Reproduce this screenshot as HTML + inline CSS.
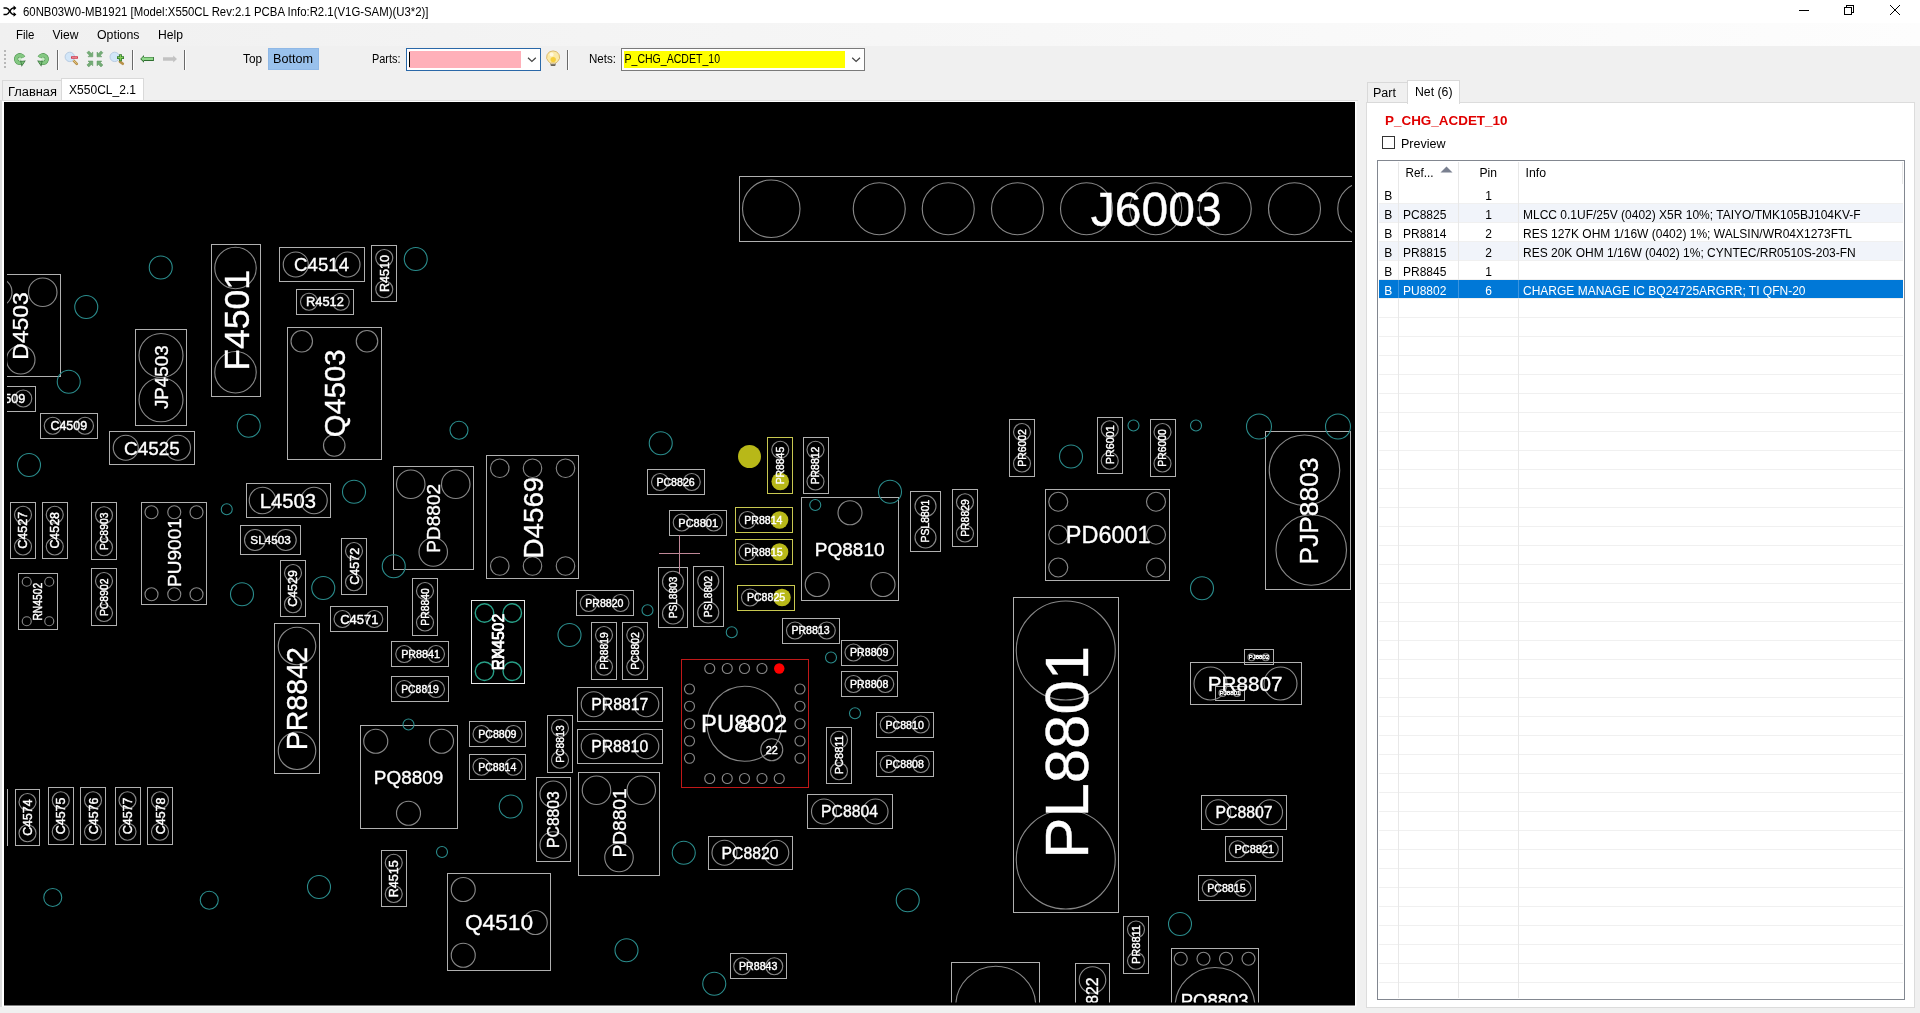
<!DOCTYPE html>
<html><head><meta charset="utf-8"><title>60NB03W0-MB1921</title>
<style>
html,body{margin:0;padding:0;background:#f0f0f0;overflow:hidden}
svg{display:block;will-change:transform}
text{font-family:"Liberation Sans",sans-serif}
</style></head><body>
<svg width="1920" height="1013" viewBox="0 0 1920 1013">
<defs>
<clipPath id="pc"><rect x="7" y="105" width="1345" height="897.5"/></clipPath>
<linearGradient id="mg" x1="0" x2="1" y1="0" y2="0"><stop offset="0" stop-color="#f0f0f0"/><stop offset="1" stop-color="#fdfdfd"/></linearGradient>
</defs>
<rect x="0" y="0" width="1920" height="1013" fill="#f0f0f0"/>
<rect x="0" y="0" width="1920" height="23" fill="#ffffff"/>
<rect x="0" y="23" width="1920" height="23" fill="url(#mg)"/>
<g fill="none" stroke="#000" stroke-width="1.5" stroke-linecap="butt" stroke-linejoin="miter"><path d="M3.5 8H6.5C9.5 8 10 14.4 13 14.4H15"/><path d="M3.5 14.4H6.5C9.5 14.4 10 8 13 8H15"/></g><path d="M13.6 5.6L16.4 8L13.6 10.4ZM13.6 12L16.4 14.4L13.6 16.8Z" fill="#000"/>
<text x="23" y="15.6" font-size="12" fill="#000" textLength="405.5" lengthAdjust="spacingAndGlyphs">60NB03W0-MB1921 [Model:X550CL Rev:2.1 PCBA Info:R2.1(V1G-SAM)(U3*2)]</text>
<g stroke="#000" stroke-width="1" fill="none" shape-rendering="crispEdges"><path d="M1799 10.5H1809"/><rect x="1844.5" y="7.5" width="7" height="7"/><path d="M1846.5 7.5V5.5H1853.5V12.5H1851.5"/></g><path d="M1890 5L1900 15M1900 5L1890 15" stroke="#000" stroke-width="1" fill="none"/>
<text x="16" y="38.5" font-size="12" fill="#000" textLength="18.5" lengthAdjust="spacingAndGlyphs">File</text>
<text x="52.5" y="38.5" font-size="12" fill="#000" textLength="26" lengthAdjust="spacingAndGlyphs">View</text>
<text x="97" y="38.5" font-size="12" fill="#000" textLength="42.5" lengthAdjust="spacingAndGlyphs">Options</text>
<text x="158" y="38.5" font-size="12" fill="#000" textLength="25" lengthAdjust="spacingAndGlyphs">Help</text>
<g fill="#b8b8b8"><rect x="4" y="50" width="2" height="2"/><rect x="4" y="54" width="2" height="2"/><rect x="4" y="58" width="2" height="2"/><rect x="4" y="62" width="2" height="2"/><rect x="4" y="66" width="2" height="2"/></g>
<path d="M57.5 49.5V70" stroke="#6a6a6a" stroke-width="1" shape-rendering="crispEdges"/><path d="M58.5 49.5V70" stroke="#ffffff" stroke-width="1" shape-rendering="crispEdges"/>
<path d="M132.5 49.5V70" stroke="#6a6a6a" stroke-width="1" shape-rendering="crispEdges"/><path d="M133.5 49.5V70" stroke="#ffffff" stroke-width="1" shape-rendering="crispEdges"/>
<path d="M184.5 49.5V70" stroke="#6a6a6a" stroke-width="1" shape-rendering="crispEdges"/><path d="M185.5 49.5V70" stroke="#ffffff" stroke-width="1" shape-rendering="crispEdges"/>
<path d="M567.5 49.5V70" stroke="#6a6a6a" stroke-width="1" shape-rendering="crispEdges"/><path d="M568.5 49.5V70" stroke="#ffffff" stroke-width="1" shape-rendering="crispEdges"/>
<g transform="translate(19.9,59.1) scale(1,1)"><path d="M3.45 -1.6A3.8 3.8 0 1 0 2.45 2.9" fill="none" stroke="#4f9450" stroke-width="4.3"/><path d="M3.45 -1.6A3.8 3.8 0 1 0 2.45 2.9" fill="none" stroke="#84c882" stroke-width="3.1"/><path d="M0.4 1.9L5.9 1.5L1.7 7.7Z" fill="#2f6a34"/><path d="M1.2 2.5L4.8 2.2L2 6.2Z" fill="#78bd76"/><circle cx="0.1" cy="-0.1" r="1.3" fill="#c4f0c0"/></g>
<g transform="translate(43,59.1) scale(-1,1)"><path d="M3.45 -1.6A3.8 3.8 0 1 0 2.45 2.9" fill="none" stroke="#4f9450" stroke-width="4.3"/><path d="M3.45 -1.6A3.8 3.8 0 1 0 2.45 2.9" fill="none" stroke="#84c882" stroke-width="3.1"/><path d="M0.4 1.9L5.9 1.5L1.7 7.7Z" fill="#2f6a34"/><path d="M1.2 2.5L4.8 2.2L2 6.2Z" fill="#78bd76"/><circle cx="0.1" cy="-0.1" r="1.3" fill="#c4f0c0"/></g>
<g><path d="M73.6 60.7L76.8 63.9" stroke="#b89048" stroke-width="2.6" stroke-linecap="round"/><path d="M73.4 60.3L76.4 63.3" stroke="#e8cc88" stroke-width="1" stroke-linecap="round"/><circle cx="69.8" cy="56.9" r="4.7" fill="#d2e6f8" stroke="#b4c8e0" stroke-width="0.9"/><rect x="71.1" y="56.3" width="6.8" height="2.4" fill="#d02c40"/><rect x="72" y="57" width="5" height="0.9" fill="#f08890"/></g>
<g><path d="M119.9 61.6L122.8 63.8" stroke="#b89048" stroke-width="2.6" stroke-linecap="round"/><circle cx="114.7" cy="56.9" r="4.7" fill="#d2e6f8" stroke="#b4c8e0" stroke-width="0.9"/><path d="M117 57.7H124M120.5 54.2V61.2" stroke="#2e7a28" stroke-width="2.8"/><path d="M117.8 57.7H123.2M120.5 55V60.4" stroke="#84cc58" stroke-width="1.2"/></g>
<g transform="translate(94.9,58.9)" fill="#74ac76" stroke="#5a945c" stroke-width="0.5"><path transform="scale(-1,-1)" d="M2.1 2.1H6.9L5.5 3.6L8 6.1L6.1 8L3.6 5.5L2.1 6.9Z"/><path transform="scale(-1,1)" d="M2.1 2.1H6.9L5.5 3.6L8 6.1L6.1 8L3.6 5.5L2.1 6.9Z"/><path transform="scale(1,-1)" d="M2.1 2.1H6.9L5.5 3.6L8 6.1L6.1 8L3.6 5.5L2.1 6.9Z"/><path transform="scale(1,1)" d="M2.1 2.1H6.9L5.5 3.6L8 6.1L6.1 8L3.6 5.5L2.1 6.9Z"/></g>
<path d="M140.2 58.9L144 55.1V56.9H153.9V60.9H144V62.8Z" fill="#2f6f30"/>
<path d="M141.2 58.8L143.6 56.4V57.5H153V60H143.6V61.2Z" fill="#90d88a"/>
<path d="M177 59L173.2 55.4V57.3H163V60.7H173.2V62.6Z" fill="#c2c2c2"/>
<text x="243" y="63" font-size="12" fill="#000" textLength="19" lengthAdjust="spacingAndGlyphs">Top</text>
<rect x="268" y="48" width="51" height="22" fill="#99c1ec"/><rect x="268.5" y="48.5" width="50" height="21" fill="none" stroke="#8fb8e6"/>
<text x="273" y="63" font-size="12" fill="#000" textLength="40" lengthAdjust="spacingAndGlyphs">Bottom</text>
<text x="372" y="63" font-size="12" fill="#000" textLength="28.5" lengthAdjust="spacingAndGlyphs">Parts:</text>
<rect x="406.5" y="48.5" width="134" height="22" fill="#fff" stroke="#2a68a8" shape-rendering="crispEdges"/>
<rect x="409" y="51" width="112" height="17" fill="#ffb0b9"/>
<path d="M409.5 52V67" stroke="#000" stroke-width="1" shape-rendering="crispEdges"/>
<path d="M528 57.7L531.9 61.5L535.8 57.7" fill="none" stroke="#444" stroke-width="1.2"/>
<g><rect x="550.5" y="62" width="5.1" height="3.9" rx="0.8" fill="#6a6458"/><rect x="551" y="63" width="4.1" height="1.2" fill="#d8d8d0"/><path d="M553.1 50.9A6.4 6.2 0 0 1 557.6 61.6L555.8 63H550.4L548.6 61.6A6.4 6.2 0 0 1 553.1 50.9Z" fill="#fbeaa8" stroke="#d8b468" stroke-width="0.9"/><circle cx="553.2" cy="59.6" r="2.7" fill="#f6cf3c"/><circle cx="551.6" cy="54.6" r="2" fill="#fff8e0"/></g>
<text x="589" y="63" font-size="12" fill="#000" textLength="27" lengthAdjust="spacingAndGlyphs">Nets:</text>
<rect x="621.5" y="48.5" width="243" height="22" fill="#fff" stroke="#7a7a7a" shape-rendering="crispEdges"/>
<rect x="624" y="51" width="221" height="17" fill="#ffff00"/>
<text x="624.5" y="63" font-size="12" fill="#000" textLength="95.5" lengthAdjust="spacingAndGlyphs">P_CHG_ACDET_10</text>
<path d="M852.2 57.7L856.1 61.5L860 57.7" fill="none" stroke="#444" stroke-width="1.2"/>
<rect x="2.5" y="80.5" width="59" height="22" fill="#f0f0f0" stroke="#d9d9d9" shape-rendering="crispEdges"/>
<rect x="61.5" y="78.5" width="82" height="24" fill="#ffffff" stroke="#d9d9d9" shape-rendering="crispEdges"/>
<rect x="62" y="100" width="81" height="3" fill="#ffffff"/>
<text x="8" y="96" font-size="12.5" fill="#000" textLength="49" lengthAdjust="spacingAndGlyphs">Главная</text>
<text x="69" y="93.5" font-size="12.5" fill="#000" textLength="67" lengthAdjust="spacingAndGlyphs">X550CL_2.1</text>
<rect x="0" y="100" width="1358" height="1" fill="#dddddd"/>
<rect x="0" y="101" width="2" height="906" fill="#dcdcdc"/>
<rect x="2" y="101" width="1354.5" height="905.5" fill="#ffffff"/>
<rect x="4" y="102" width="1351" height="903.5" fill="#000000"/>
<rect x="1366.5" y="102.5" width="1547" height="0" fill="none"/>
<rect x="1366.5" y="102.5" width="548" height="905" fill="#ffffff" stroke="#dcdcdc" shape-rendering="crispEdges"/>
<rect x="1367.5" y="82.5" width="40" height="20" fill="#f0f0f0" stroke="#d9d9d9" shape-rendering="crispEdges"/>
<rect x="1407.5" y="80.5" width="52" height="23" fill="#ffffff" stroke="#d9d9d9" shape-rendering="crispEdges"/>
<rect x="1408" y="101" width="51" height="3" fill="#ffffff"/>
<text x="1373" y="97.3" font-size="12" fill="#000" textLength="23" lengthAdjust="spacingAndGlyphs">Part</text>
<text x="1415" y="95.6" font-size="12" fill="#000" textLength="37.5" lengthAdjust="spacingAndGlyphs">Net (6)</text>
<text x="1385" y="124.6" font-size="13.33" fill="#e00000" textLength="122.5" lengthAdjust="spacingAndGlyphs" font-weight="bold">P_CHG_ACDET_10</text>
<rect x="1382.5" y="136.5" width="12" height="12" fill="#fff" stroke="#333" shape-rendering="crispEdges"/>
<text x="1401" y="147.5" font-size="12" fill="#000" textLength="44.5" lengthAdjust="spacingAndGlyphs">Preview</text>
<rect x="1377.5" y="160.5" width="527" height="839" fill="#fff" stroke="#828790" shape-rendering="crispEdges"/>
<rect x="1379" y="204" width="524" height="18" fill="#f1f4fa"/>
<rect x="1379" y="242" width="524" height="18" fill="#f1f4fa"/>
<rect x="1379" y="280" width="524" height="18" fill="#f1f4fa"/>
<g stroke="#f0f0f0" stroke-width="1" shape-rendering="crispEdges"><path d="M1379 203.5H1903"/><path d="M1379 222.5H1903"/><path d="M1379 241.5H1903"/><path d="M1379 260.5H1903"/><path d="M1379 279.5H1903"/><path d="M1379 298.5H1903"/><path d="M1379 317.5H1903"/><path d="M1379 336.5H1903"/><path d="M1379 355.5H1903"/><path d="M1379 374.5H1903"/><path d="M1379 393.5H1903"/><path d="M1379 412.5H1903"/><path d="M1379 431.5H1903"/><path d="M1379 450.5H1903"/><path d="M1379 469.5H1903"/><path d="M1379 488.5H1903"/><path d="M1379 507.5H1903"/><path d="M1379 526.5H1903"/><path d="M1379 545.5H1903"/><path d="M1379 564.5H1903"/><path d="M1379 583.5H1903"/><path d="M1379 602.5H1903"/><path d="M1379 621.5H1903"/><path d="M1379 640.5H1903"/><path d="M1379 659.5H1903"/><path d="M1379 678.5H1903"/><path d="M1379 697.5H1903"/><path d="M1379 716.5H1903"/><path d="M1379 735.5H1903"/><path d="M1379 754.5H1903"/><path d="M1379 773.5H1903"/><path d="M1379 792.5H1903"/><path d="M1379 811.5H1903"/><path d="M1379 830.5H1903"/><path d="M1379 849.5H1903"/><path d="M1379 868.5H1903"/><path d="M1379 887.5H1903"/><path d="M1379 906.5H1903"/><path d="M1379 925.5H1903"/><path d="M1379 944.5H1903"/><path d="M1379 963.5H1903"/><path d="M1379 982.5H1903"/></g>
<g stroke="#e8e8e8" stroke-width="1" shape-rendering="crispEdges"><path d="M1398.5 162V998M1458.5 162V998M1518.5 162V998M1902.5 162V184"/></g>
<rect x="1379" y="280" width="524" height="18" fill="#0078d7"/>
<g stroke="#3a94e0" stroke-width="1" shape-rendering="crispEdges"><path d="M1398.5 280V298M1458.5 280V298M1518.5 280V298"/></g>
<text x="1405.5" y="177" font-size="12" fill="#000" textLength="28" lengthAdjust="spacingAndGlyphs">Ref...</text>
<path d="M1440.5 172.5L1446.5 166.5L1452.5 172.5Z" fill="#7a8090"/>
<text x="1479.5" y="177" font-size="12" fill="#000" textLength="17.5" lengthAdjust="spacingAndGlyphs">Pin</text>
<text x="1525.5" y="177" font-size="12" fill="#000" textLength="20.5" lengthAdjust="spacingAndGlyphs">Info</text>
<text x="1384.3" y="200" font-size="12" fill="#000">B</text>
<text x="1488.7" y="200" font-size="12" fill="#000" text-anchor="middle">1</text>
<text x="1384.3" y="219" font-size="12" fill="#000">B</text>
<text x="1403" y="219" font-size="12" fill="#000">PC8825</text>
<text x="1488.7" y="219" font-size="12" fill="#000" text-anchor="middle">1</text>
<text x="1523" y="219" font-size="12" fill="#000">MLCC 0.1UF/25V (0402) X5R 10%; TAIYO/TMK105BJ104KV-F</text>
<text x="1384.3" y="238" font-size="12" fill="#000">B</text>
<text x="1403" y="238" font-size="12" fill="#000">PR8814</text>
<text x="1488.7" y="238" font-size="12" fill="#000" text-anchor="middle">2</text>
<text x="1523" y="238" font-size="12" fill="#000">RES 127K OHM 1/16W (0402) 1%; WALSIN/WR04X1273FTL</text>
<text x="1384.3" y="257" font-size="12" fill="#000">B</text>
<text x="1403" y="257" font-size="12" fill="#000">PR8815</text>
<text x="1488.7" y="257" font-size="12" fill="#000" text-anchor="middle">2</text>
<text x="1523" y="257" font-size="12" fill="#000">RES 20K OHM 1/16W (0402) 1%; CYNTEC/RR0510S-203-FN</text>
<text x="1384.3" y="276" font-size="12" fill="#000">B</text>
<text x="1403" y="276" font-size="12" fill="#000">PR8845</text>
<text x="1488.7" y="276" font-size="12" fill="#000" text-anchor="middle">1</text>
<text x="1384.3" y="295" font-size="12" fill="#fff">B</text>
<text x="1403" y="295" font-size="12" fill="#fff">PU8802</text>
<text x="1488.7" y="295" font-size="12" fill="#fff" text-anchor="middle">6</text>
<text x="1523" y="295" font-size="12" fill="#fff">CHARGE MANAGE IC BQ24725ARGRR; TI QFN-20</text>
<g clip-path="url(#pc)">
<g fill="none" stroke-width="1" shape-rendering="crispEdges">
<rect x="-19.5" y="274.5" width="80" height="102" stroke="#b0b0b0"/>
<rect x="-21.5" y="386.5" width="57" height="25" stroke="#b0b0b0"/>
<rect x="40.5" y="413.5" width="57" height="25" stroke="#b0b0b0"/>
<rect x="135.5" y="329.5" width="51" height="96" stroke="#b0b0b0"/>
<rect x="211.5" y="244.5" width="49" height="152" stroke="#b0b0b0"/>
<rect x="279.5" y="247.5" width="85" height="34" stroke="#b0b0b0"/>
<rect x="371.5" y="245.5" width="25" height="56" stroke="#b0b0b0"/>
<rect x="296.5" y="289.5" width="57" height="25" stroke="#b0b0b0"/>
<rect x="287.5" y="327.5" width="94" height="132" stroke="#b0b0b0"/>
<rect x="109.5" y="431.5" width="85" height="33" stroke="#b0b0b0"/>
<rect x="246.5" y="483.5" width="84" height="34" stroke="#b0b0b0"/>
<rect x="393.5" y="466.5" width="80" height="103" stroke="#b0b0b0"/>
<rect x="10.5" y="502.5" width="25" height="56" stroke="#b0b0b0"/>
<rect x="42.5" y="502.5" width="25" height="56" stroke="#b0b0b0"/>
<rect x="91.5" y="502.5" width="25" height="57" stroke="#b0b0b0"/>
<rect x="91.5" y="568.5" width="25" height="57" stroke="#b0b0b0"/>
<rect x="18.5" y="573.5" width="39" height="56" stroke="#b0b0b0"/>
<rect x="141.5" y="502.5" width="65" height="102" stroke="#b0b0b0"/>
<rect x="240.5" y="525.5" width="60" height="29" stroke="#b0b0b0"/>
<rect x="280.5" y="560.5" width="25" height="56" stroke="#b0b0b0"/>
<rect x="341.5" y="538.5" width="25" height="56" stroke="#b0b0b0"/>
<rect x="330.5" y="606.5" width="57" height="25" stroke="#b0b0b0"/>
<rect x="412.5" y="578.5" width="25" height="57" stroke="#b0b0b0"/>
<rect x="391.5" y="641.5" width="57" height="25" stroke="#b0b0b0"/>
<rect x="391.5" y="676.5" width="57" height="25" stroke="#b0b0b0"/>
<rect x="274.5" y="623.5" width="45" height="150" stroke="#b0b0b0"/>
<rect x="15.5" y="789.5" width="24" height="56" stroke="#b0b0b0"/>
<rect x="48.5" y="787.5" width="25" height="57" stroke="#b0b0b0"/>
<rect x="80.5" y="787.5" width="25" height="57" stroke="#b0b0b0"/>
<rect x="115.5" y="787.5" width="25" height="57" stroke="#b0b0b0"/>
<rect x="147.5" y="787.5" width="25" height="57" stroke="#b0b0b0"/>
<rect x="360.5" y="725.5" width="97" height="103" stroke="#b0b0b0"/>
<rect x="381.5" y="850.5" width="25" height="56" stroke="#b0b0b0"/>
<rect x="447.5" y="873.5" width="103" height="97" stroke="#b0b0b0"/>
<rect x="739.5" y="176.5" width="833" height="65" stroke="#b0b0b0"/>
<rect x="486.5" y="455.5" width="92" height="123" stroke="#b0b0b0"/>
<rect x="647.5" y="469.5" width="57" height="25" stroke="#b0b0b0"/>
<rect x="669.5" y="510.5" width="57" height="25" stroke="#b0b0b0"/>
<rect x="803.5" y="437.5" width="25" height="56" stroke="#b0b0b0"/>
<rect x="801.5" y="497.5" width="97" height="103" stroke="#b0b0b0"/>
<rect x="910.5" y="491.5" width="30" height="60" stroke="#b0b0b0"/>
<rect x="952.5" y="489.5" width="25" height="57" stroke="#b0b0b0"/>
<rect x="658.5" y="567.5" width="29" height="60" stroke="#b0b0b0"/>
<rect x="693.5" y="566.5" width="30" height="60" stroke="#b0b0b0"/>
<rect x="576.5" y="590.5" width="57" height="25" stroke="#b0b0b0"/>
<rect x="591.5" y="622.5" width="25" height="57" stroke="#b0b0b0"/>
<rect x="622.5" y="622.5" width="25" height="57" stroke="#b0b0b0"/>
<rect x="782.5" y="618.5" width="57" height="25" stroke="#b0b0b0"/>
<rect x="841.5" y="640.5" width="56" height="25" stroke="#b0b0b0"/>
<rect x="841.5" y="671.5" width="56" height="25" stroke="#b0b0b0"/>
<rect x="577.5" y="687.5" width="85" height="34" stroke="#b0b0b0"/>
<rect x="577.5" y="729.5" width="85" height="34" stroke="#b0b0b0"/>
<rect x="547.5" y="715.5" width="25" height="57" stroke="#b0b0b0"/>
<rect x="469.5" y="721.5" width="56" height="25" stroke="#b0b0b0"/>
<rect x="469.5" y="754.5" width="56" height="25" stroke="#b0b0b0"/>
<rect x="826.5" y="727.5" width="25" height="56" stroke="#b0b0b0"/>
<rect x="876.5" y="712.5" width="57" height="25" stroke="#b0b0b0"/>
<rect x="876.5" y="751.5" width="57" height="25" stroke="#b0b0b0"/>
<rect x="536.5" y="777.5" width="34" height="84" stroke="#b0b0b0"/>
<rect x="578.5" y="772.5" width="81" height="103" stroke="#b0b0b0"/>
<rect x="807.5" y="794.5" width="85" height="34" stroke="#b0b0b0"/>
<rect x="708.5" y="836.5" width="84" height="33" stroke="#b0b0b0"/>
<rect x="730.5" y="953.5" width="56" height="25" stroke="#b0b0b0"/>
<rect x="1009.5" y="419.5" width="25" height="57" stroke="#b0b0b0"/>
<rect x="1097.5" y="417.5" width="25" height="56" stroke="#b0b0b0"/>
<rect x="1150.5" y="419.5" width="25" height="57" stroke="#b0b0b0"/>
<rect x="1045.5" y="489.5" width="124" height="91" stroke="#b0b0b0"/>
<rect x="1265.5" y="431.5" width="85" height="158" stroke="#b0b0b0"/>
<rect x="1013.5" y="597.5" width="105" height="315" stroke="#b0b0b0"/>
<rect x="1190.5" y="662.5" width="111" height="42" stroke="#b0b0b0"/>
<rect x="1244.5" y="649.5" width="29" height="15" stroke="#b0b0b0"/>
<rect x="1215.5" y="686.5" width="29" height="14" stroke="#b0b0b0"/>
<rect x="1201.5" y="795.5" width="85" height="34" stroke="#b0b0b0"/>
<rect x="1225.5" y="836.5" width="57" height="25" stroke="#b0b0b0"/>
<rect x="1198.5" y="875.5" width="57" height="25" stroke="#b0b0b0"/>
<rect x="1123.5" y="916.5" width="25" height="57" stroke="#b0b0b0"/>
<rect x="1171.5" y="948.5" width="87" height="104" stroke="#b0b0b0"/>
<rect x="951.5" y="962.5" width="88" height="88" stroke="#b0b0b0"/>
<rect x="1075.5" y="963.5" width="34" height="85" stroke="#b0b0b0"/>
<rect x="471.5" y="600.5" width="53" height="83" stroke="#e8e8e8"/>
<path d="M7.5 789V846" stroke="#b0b0b0"/>
<rect x="767.5" y="437.5" width="25" height="56" stroke="#c8c850"/>
<rect x="735.5" y="507.5" width="57" height="25" stroke="#c8c850"/>
<rect x="735.5" y="539.5" width="57" height="25" stroke="#c8c850"/>
<rect x="737.5" y="585.5" width="57" height="25" stroke="#c8c850"/>
<rect x="681.5" y="659.5" width="127" height="128" stroke="#c01818"/>
</g>
<g fill="none" stroke="#868686" stroke-width="1.15">
<circle cx="42.75" cy="292.25" r="14.25"/>
<circle cx="20.75" cy="359.75" r="14.25"/>
<circle cx="-2.25" cy="292.25" r="14.25"/>
<circle cx="23.25" cy="398.5" r="8.5"/>
<circle cx="-9" cy="398.5" r="8.5"/>
<circle cx="52.75" cy="425.75" r="8.5"/>
<circle cx="85" cy="425.75" r="8.5"/>
<circle cx="161" cy="355.5" r="22"/>
<circle cx="161" cy="399.75" r="22"/>
<circle cx="235.5" cy="268" r="20.75"/>
<circle cx="235.5" cy="372.25" r="20.75"/>
<circle cx="295.75" cy="264.5" r="12.5"/>
<circle cx="347.5" cy="264.5" r="12.5"/>
<circle cx="384.25" cy="258" r="8.5"/>
<circle cx="384.25" cy="289.25" r="8.5"/>
<circle cx="309" cy="301.75" r="8.5"/>
<circle cx="340.75" cy="301.75" r="8.5"/>
<circle cx="301.75" cy="341.25" r="10.75"/>
<circle cx="367" cy="341.25" r="10.75"/>
<circle cx="334.25" cy="445.5" r="10.75"/>
<circle cx="125.75" cy="447.75" r="12.5"/>
<circle cx="178" cy="447.75" r="12.5"/>
<circle cx="262.5" cy="500.5" r="13.25"/>
<circle cx="314" cy="500.5" r="13.25"/>
<circle cx="410.75" cy="484.25" r="14.25"/>
<circle cx="455.75" cy="484.25" r="14.25"/>
<circle cx="433.25" cy="552" r="14.25"/>
<circle cx="23" cy="514.75" r="8.5"/>
<circle cx="23" cy="546.5" r="8.5"/>
<circle cx="54.75" cy="514.75" r="8.5"/>
<circle cx="54.75" cy="546.5" r="8.5"/>
<circle cx="104" cy="515.25" r="8.5"/>
<circle cx="104" cy="547.25" r="8.5"/>
<circle cx="104" cy="581" r="8.5"/>
<circle cx="104" cy="613" r="8.5"/>
<circle cx="26.75" cy="581.75" r="4.5"/>
<circle cx="49.25" cy="581.75" r="4.5"/>
<circle cx="26.75" cy="621.25" r="4.5"/>
<circle cx="49.25" cy="621.25" r="4.5"/>
<circle cx="151.5" cy="512.25" r="6.5"/>
<circle cx="151.5" cy="594.25" r="6.5"/>
<circle cx="174.25" cy="512.25" r="6.5"/>
<circle cx="174.25" cy="594.25" r="6.5"/>
<circle cx="196.5" cy="512.25" r="6.5"/>
<circle cx="196.5" cy="594.25" r="6.5"/>
<circle cx="255" cy="540" r="10.5"/>
<circle cx="285.75" cy="540" r="10.5"/>
<circle cx="293" cy="573" r="8.5"/>
<circle cx="293" cy="604.25" r="8.5"/>
<circle cx="354" cy="551" r="8.5"/>
<circle cx="354" cy="582.25" r="8.5"/>
<circle cx="342.5" cy="619" r="8.5"/>
<circle cx="374.25" cy="619" r="8.5"/>
<circle cx="425" cy="591" r="8.5"/>
<circle cx="425" cy="622.5" r="8.5"/>
<circle cx="404.25" cy="654" r="8.5"/>
<circle cx="436" cy="654" r="8.5"/>
<circle cx="404.25" cy="689" r="8.5"/>
<circle cx="436" cy="689" r="8.5"/>
<circle cx="297" cy="646" r="18.75"/>
<circle cx="297" cy="750.75" r="18.75"/>
<circle cx="27.5" cy="802" r="8.5"/>
<circle cx="27.5" cy="833.25" r="8.5"/>
<circle cx="60.75" cy="800.25" r="8.5"/>
<circle cx="60.75" cy="831.75" r="8.5"/>
<circle cx="93" cy="800.25" r="8.5"/>
<circle cx="93" cy="831.75" r="8.5"/>
<circle cx="127.5" cy="800.25" r="8.5"/>
<circle cx="127.5" cy="831.75" r="8.5"/>
<circle cx="160" cy="800.25" r="8.5"/>
<circle cx="160" cy="831.75" r="8.5"/>
<circle cx="375.75" cy="741.25" r="12"/>
<circle cx="441.5" cy="741.25" r="12"/>
<circle cx="408.5" cy="813.25" r="12"/>
<circle cx="393.75" cy="862.75" r="8.5"/>
<circle cx="393.75" cy="894" r="8.5"/>
<circle cx="463.25" cy="889.5" r="12"/>
<circle cx="463.25" cy="955.25" r="12"/>
<circle cx="535.25" cy="922.5" r="12"/>
<circle cx="771.25" cy="208.75" r="28.75"/>
<circle cx="879.25" cy="208.75" r="26"/>
<circle cx="948.25" cy="208.75" r="26"/>
<circle cx="1017.5" cy="208.75" r="26"/>
<circle cx="1086.5" cy="208.75" r="26"/>
<circle cx="1155.75" cy="208.75" r="26"/>
<circle cx="1225.25" cy="208.75" r="26"/>
<circle cx="1294.5" cy="208.75" r="26"/>
<circle cx="1363.75" cy="208.75" r="26"/>
<circle cx="499.75" cy="468.25" r="9.25"/>
<circle cx="499.75" cy="566" r="9.25"/>
<circle cx="532.5" cy="468.25" r="9.25"/>
<circle cx="532.5" cy="566" r="9.25"/>
<circle cx="565.5" cy="468.25" r="9.25"/>
<circle cx="565.5" cy="566" r="9.25"/>
<circle cx="660" cy="482" r="8.5"/>
<circle cx="691.75" cy="482" r="8.5"/>
<circle cx="681.75" cy="522.5" r="8.5"/>
<circle cx="713.75" cy="522.5" r="8.5"/>
<circle cx="815.5" cy="449.75" r="8.5"/>
<circle cx="815.5" cy="481.5" r="8.5"/>
<circle cx="850" cy="512.75" r="12"/>
<circle cx="817.25" cy="584.5" r="12"/>
<circle cx="883" cy="584.5" r="12"/>
<circle cx="925.5" cy="506" r="10.5"/>
<circle cx="925.5" cy="537.5" r="10.5"/>
<circle cx="965" cy="502.25" r="8.5"/>
<circle cx="965" cy="533.5" r="8.5"/>
<circle cx="673" cy="581.75" r="10.5"/>
<circle cx="673" cy="613.5" r="10.5"/>
<circle cx="708.25" cy="581" r="10.5"/>
<circle cx="708.25" cy="612.5" r="10.5"/>
<circle cx="588.75" cy="603" r="8.5"/>
<circle cx="620.5" cy="603" r="8.5"/>
<circle cx="604" cy="635" r="8.5"/>
<circle cx="604" cy="666.75" r="8.5"/>
<circle cx="635.25" cy="635" r="8.5"/>
<circle cx="635.25" cy="666.75" r="8.5"/>
<circle cx="795" cy="630.5" r="8.5"/>
<circle cx="826.75" cy="630.5" r="8.5"/>
<circle cx="853.5" cy="652.5" r="8.5"/>
<circle cx="885.25" cy="652.5" r="8.5"/>
<circle cx="853.5" cy="684" r="8.5"/>
<circle cx="885.25" cy="684" r="8.5"/>
<circle cx="593.75" cy="704.25" r="12.5"/>
<circle cx="646.25" cy="704.25" r="12.5"/>
<circle cx="593.75" cy="746.25" r="12.5"/>
<circle cx="646.25" cy="746.25" r="12.5"/>
<circle cx="560" cy="728" r="8.5"/>
<circle cx="560" cy="759.75" r="8.5"/>
<circle cx="481.5" cy="734" r="8.5"/>
<circle cx="513.5" cy="734" r="8.5"/>
<circle cx="481.5" cy="766.75" r="8.5"/>
<circle cx="513.5" cy="766.75" r="8.5"/>
<circle cx="839" cy="739.75" r="8.5"/>
<circle cx="839" cy="771.25" r="8.5"/>
<circle cx="888.75" cy="724.5" r="8.5"/>
<circle cx="920.75" cy="724.5" r="8.5"/>
<circle cx="888.75" cy="764" r="8.5"/>
<circle cx="920.75" cy="764" r="8.5"/>
<circle cx="553.25" cy="794.25" r="13.25"/>
<circle cx="553.25" cy="845" r="13.25"/>
<circle cx="596.5" cy="790.25" r="14.25"/>
<circle cx="641.25" cy="790.25" r="14.25"/>
<circle cx="619" cy="857.5" r="14.25"/>
<circle cx="824" cy="811.5" r="12.5"/>
<circle cx="875.5" cy="811.5" r="12.5"/>
<circle cx="724.5" cy="852.75" r="12.5"/>
<circle cx="776.25" cy="852.75" r="12.5"/>
<circle cx="742.25" cy="966.25" r="8.5"/>
<circle cx="774.25" cy="966.25" r="8.5"/>
<circle cx="1022" cy="432" r="8.5"/>
<circle cx="1022" cy="463.5" r="8.5"/>
<circle cx="1109.75" cy="429.25" r="8.5"/>
<circle cx="1109.75" cy="460.75" r="8.5"/>
<circle cx="1162.5" cy="432" r="8.5"/>
<circle cx="1162.5" cy="463.5" r="8.5"/>
<circle cx="1058.25" cy="501.75" r="9.5"/>
<circle cx="1058.25" cy="534.75" r="9.5"/>
<circle cx="1058.25" cy="567.5" r="9.5"/>
<circle cx="1156" cy="501.75" r="9.5"/>
<circle cx="1156" cy="534.75" r="9.5"/>
<circle cx="1156" cy="567.5" r="9.5"/>
<circle cx="1304.5" cy="470.25" r="35.25"/>
<circle cx="1311.25" cy="550" r="35.25"/>
<circle cx="1065.75" cy="650.5" r="49.5"/>
<circle cx="1065.75" cy="859.5" r="49.5"/>
<circle cx="1210.5" cy="683.5" r="16.5"/>
<circle cx="1280.5" cy="683.5" r="16.5"/>
<circle cx="1251.5" cy="657.25" r="3.5"/>
<circle cx="1265.75" cy="657.25" r="3.5"/>
<circle cx="1222.5" cy="693" r="3.5"/>
<circle cx="1237" cy="693" r="3.5"/>
<circle cx="1218.25" cy="812.25" r="12.5"/>
<circle cx="1270" cy="812.25" r="12.5"/>
<circle cx="1237.75" cy="849.25" r="8.5"/>
<circle cx="1269.75" cy="849.25" r="8.5"/>
<circle cx="1210.75" cy="888" r="8.5"/>
<circle cx="1242.5" cy="888" r="8.5"/>
<circle cx="1136" cy="929.5" r="8.5"/>
<circle cx="1136" cy="960.75" r="8.5"/>
<circle cx="1180.75" cy="958.75" r="6.5"/>
<circle cx="1203.5" cy="958.75" r="6.5"/>
<circle cx="1226" cy="958.75" r="6.5"/>
<circle cx="1248.5" cy="958.75" r="6.5"/>
<circle cx="1215" cy="1007.5" r="40"/>
<circle cx="995.75" cy="1006.25" r="40"/>
<circle cx="1092.5" cy="980" r="13.25"/>
<circle cx="780.25" cy="449.75" r="8.5"/>
<circle cx="747.5" cy="520" r="8.5"/>
<circle cx="747.5" cy="552" r="8.5"/>
<circle cx="750" cy="597.5" r="8.5"/>
<circle cx="709.75" cy="668.5" r="5"/>
<circle cx="709.75" cy="778.5" r="5"/>
<circle cx="727.25" cy="668.5" r="5"/>
<circle cx="727.25" cy="778.5" r="5"/>
<circle cx="744.5" cy="668.5" r="5"/>
<circle cx="744.5" cy="778.5" r="5"/>
<circle cx="762" cy="668.5" r="5"/>
<circle cx="762" cy="778.5" r="5"/>
<circle cx="779.25" cy="778.5" r="5"/>
<circle cx="689.5" cy="689" r="5"/>
<circle cx="800" cy="689" r="5"/>
<circle cx="689.5" cy="706.25" r="5"/>
<circle cx="800" cy="706.25" r="5"/>
<circle cx="689.5" cy="723.75" r="5"/>
<circle cx="800" cy="723.75" r="5"/>
<circle cx="689.5" cy="741" r="5"/>
<circle cx="800" cy="741" r="5"/>
<circle cx="689.5" cy="758.25" r="5"/>
<circle cx="800" cy="758.25" r="5"/>
<circle cx="744.5" cy="723.75" r="37.5"/>
<circle cx="771.75" cy="749.75" r="11"/>
</g>
<g fill="none" stroke="#2a8c8c" stroke-width="1.1">
<circle cx="160.75" cy="267.5" r="11.5"/>
<circle cx="86.25" cy="307" r="11.5"/>
<circle cx="415.75" cy="259" r="11.5"/>
<circle cx="68.75" cy="381.75" r="11.5"/>
<circle cx="248.75" cy="425.75" r="11.5"/>
<circle cx="459" cy="430.25" r="9"/>
<circle cx="29" cy="465" r="11.5"/>
<circle cx="354" cy="491.75" r="11.5"/>
<circle cx="226.75" cy="509.25" r="5.5"/>
<circle cx="242" cy="594.25" r="11.5"/>
<circle cx="323.25" cy="588" r="11.5"/>
<circle cx="393.75" cy="566.25" r="11.5"/>
<circle cx="408.5" cy="724.5" r="5.5"/>
<circle cx="442" cy="852" r="5.5"/>
<circle cx="319" cy="887" r="11.5"/>
<circle cx="52.75" cy="897.5" r="9"/>
<circle cx="209.25" cy="900.25" r="9"/>
<circle cx="660.75" cy="443.25" r="11.5"/>
<circle cx="890" cy="491.75" r="11.5"/>
<circle cx="815.25" cy="505" r="5.5"/>
<circle cx="647.5" cy="610.25" r="5.5"/>
<circle cx="569.5" cy="635" r="11.5"/>
<circle cx="731.75" cy="632.25" r="5.5"/>
<circle cx="831" cy="657.5" r="5.5"/>
<circle cx="855" cy="713.25" r="5.5"/>
<circle cx="510.75" cy="806.5" r="11.5"/>
<circle cx="683.75" cy="852.75" r="11.5"/>
<circle cx="626.5" cy="950.25" r="11.5"/>
<circle cx="714.25" cy="983.75" r="11.5"/>
<circle cx="907.75" cy="900.25" r="11.5"/>
<circle cx="1071" cy="456.5" r="11.5"/>
<circle cx="1133.5" cy="425.5" r="5.5"/>
<circle cx="1196" cy="425.5" r="5.5"/>
<circle cx="1259" cy="426.5" r="12.5"/>
<circle cx="1338" cy="426.5" r="12.5"/>
<circle cx="1202" cy="588.25" r="11.5"/>
<circle cx="1180" cy="924" r="11.5"/>
</g>
<g fill="none" stroke="#28a088" stroke-width="1.4">
<circle cx="484.5" cy="613" r="9.25"/>
<circle cx="484.5" cy="671.25" r="9.25"/>
<circle cx="512.25" cy="613" r="9.25"/>
<circle cx="512.25" cy="671.25" r="9.25"/>
</g>
<g fill="#b8b818">
<circle cx="749.5" cy="456.5" r="11.5"/>
<circle cx="780.25" cy="481.5" r="8.8"/>
<circle cx="779.5" cy="520" r="8.8"/>
<circle cx="779.5" cy="552" r="8.8"/>
<circle cx="782" cy="597.5" r="8.8"/>
</g>
<circle cx="779.25" cy="668.5" r="5.2" fill="#ff0000"/>
<path d="M679.5 535V574M659 553.5H700" stroke="#c08898" stroke-width="1" fill="none" shape-rendering="crispEdges"/>
<g text-anchor="middle" stroke="#fff" stroke-width="0.35" font-family="'Liberation Sans',sans-serif">
<text transform="translate(20.25,325.5) rotate(-90)" x="-0.45" y="8.18" font-size="22.86" fill="#fff">D4503</text>
<text transform="translate(7,398.62)" x="-0.22" y="4.51" font-size="12.6" fill="#fff" stroke-width="0.42">R4509</text>
<text transform="translate(68.75,425.88)" x="-0.02" y="4.46" font-size="12.46" fill="#fff" stroke-width="0.42">C4509</text>
<text transform="translate(161,377.5) rotate(-90)" x="0.27" y="6.71" font-size="18.75" fill="#fff">JP4503</text>
<text transform="translate(235.75,321.88) rotate(-90)" x="1.52" y="12.74" font-size="35.58" fill="#fff">F4501</text>
<text transform="translate(321.75,264.62)" x="-0.2" y="6.68" font-size="18.65" fill="#fff">C4514</text>
<text transform="translate(384.12,273.25) rotate(-90)" x="-0.28" y="4.5" font-size="12.56" fill="#fff" stroke-width="0.42">R4510</text>
<text transform="translate(325.12,301.75)" x="-0.21" y="4.61" font-size="12.88" fill="#fff" stroke-width="0.42">R4512</text>
<text transform="translate(334.5,393.38) rotate(-90)" x="-0.05" y="10.45" font-size="29.19" fill="#fff">Q4503</text>
<text transform="translate(152,447.75)" x="-0.09" y="6.77" font-size="18.91" fill="#fff">C4525</text>
<text transform="translate(288.38,500.38)" x="-0.4" y="7.24" font-size="20.24" fill="#fff">L4503</text>
<text transform="translate(433.5,518) rotate(-90)" x="-0.31" y="6.81" font-size="19.03" fill="#fff">PD8802</text>
<text transform="translate(22.88,530.25) rotate(-90)" x="-0" y="4.46" font-size="12.47" fill="#fff" stroke-width="0.42">C4527</text>
<text transform="translate(54.75,530.25) rotate(-90)" x="-0.04" y="4.45" font-size="12.44" fill="#fff" stroke-width="0.42">C4528</text>
<text transform="translate(103.88,531.12) rotate(-90)" x="-0.2" y="3.72" font-size="10.39" fill="#fff" stroke-width="0.42">PC8903</text>
<text transform="translate(103.88,597.12) rotate(-90)" x="-0.17" y="3.73" font-size="10.41" fill="#fff" stroke-width="0.42">PC8902</text>
<text transform="translate(38,601.5) rotate(-90) scale(0.87,1)" x="-0.19" y="4.25" font-size="11.87" fill="#fff" stroke-width="0.42">RN4502</text>
<text transform="translate(174,553.38) rotate(-90)" x="0.81" y="6.81" font-size="19.02" fill="#fff">PU9001</text>
<text transform="translate(270.62,539.88)" x="-0.01" y="4.21" font-size="11.76" fill="#fff" stroke-width="0.42">SL4503</text>
<text transform="translate(292.88,588.5) rotate(-90)" x="-0.02" y="4.46" font-size="12.46" fill="#fff" stroke-width="0.42">C4529</text>
<text transform="translate(354.12,566.25) rotate(-90)" x="-0" y="4.46" font-size="12.47" fill="#fff" stroke-width="0.42">C4572</text>
<text transform="translate(358.62,618.88)" x="0.76" y="4.66" font-size="13" fill="#fff" stroke-width="0.42">C4571</text>
<text transform="translate(425.12,606.75) rotate(-90)" x="-0.23" y="3.71" font-size="10.37" fill="#fff" stroke-width="0.42">PR8840</text>
<text transform="translate(420.12,654)" x="0.46" y="3.86" font-size="10.77" fill="#fff" stroke-width="0.42">PR8841</text>
<text transform="translate(420.12,689.12)" x="-0.18" y="3.72" font-size="10.4" fill="#fff" stroke-width="0.42">PC8819</text>
<text transform="translate(297.12,698.25) rotate(-90)" x="-0.46" y="10.23" font-size="28.58" fill="#fff">PR8842</text>
<text transform="translate(27.38,817.5) rotate(-90)" x="-0.13" y="4.43" font-size="12.38" fill="#fff" stroke-width="0.42">C4574</text>
<text transform="translate(60.88,815.88) rotate(-90)" x="-0.06" y="4.45" font-size="12.43" fill="#fff" stroke-width="0.42">C4575</text>
<text transform="translate(93.12,815.88) rotate(-90)" x="-0.04" y="4.45" font-size="12.44" fill="#fff" stroke-width="0.42">C4576</text>
<text transform="translate(127.62,815.88) rotate(-90)" x="-0" y="4.46" font-size="12.47" fill="#fff" stroke-width="0.42">C4577</text>
<text transform="translate(160.12,815.88) rotate(-90)" x="-0.04" y="4.45" font-size="12.44" fill="#fff" stroke-width="0.42">C4578</text>
<text transform="translate(408.88,777.25)" x="-0.33" y="6.78" font-size="18.93" fill="#fff">PQ8809</text>
<text transform="translate(393.88,878.5) rotate(-90)" x="-0.26" y="4.5" font-size="12.57" fill="#fff" stroke-width="0.42">R4515</text>
<text transform="translate(499.12,922.12)" x="-0.1" y="8.13" font-size="22.71" fill="#fff">Q4510</text>
<text transform="translate(1155.5,208.88)" x="0.69" y="17.22" font-size="48.11" fill="#fff">J6003</text>
<text transform="translate(532.62,517.12) rotate(-90)" x="-0.49" y="9.94" font-size="27.77" fill="#fff">D4569</text>
<text transform="translate(675.75,481.88)" x="-0.21" y="3.8" font-size="10.6" fill="#fff" stroke-width="0.42">PC8826</text>
<text transform="translate(697.75,522.62)" x="0.47" y="3.94" font-size="11" fill="#fff" stroke-width="0.42">PC8801</text>
<text transform="translate(815.5,465.38) rotate(-90)" x="-0.17" y="3.73" font-size="10.41" fill="#fff" stroke-width="0.42">PR8812</text>
<text transform="translate(850.12,548.75)" x="-0.41" y="6.81" font-size="19.02" fill="#fff">PQ8810</text>
<text transform="translate(925.12,521.5) rotate(-90) scale(0.91,1)" x="0.49" y="4.1" font-size="11.45" fill="#fff" stroke-width="0.42">PSL8801</text>
<text transform="translate(964.88,517.88) rotate(-90)" x="-0.18" y="3.72" font-size="10.4" fill="#fff" stroke-width="0.42">PR8829</text>
<text transform="translate(673,597.25) rotate(-90) scale(0.88,1)" x="-0.22" y="4.1" font-size="11.45" fill="#fff" stroke-width="0.42">PSL8803</text>
<text transform="translate(708.12,596.38) rotate(-90) scale(0.88,1)" x="-0.18" y="4.1" font-size="11.45" fill="#fff" stroke-width="0.42">PSL8802</text>
<text transform="translate(604.62,603.12)" x="-0.23" y="3.79" font-size="10.59" fill="#fff" stroke-width="0.42">PR8820</text>
<text transform="translate(603.88,650.75) rotate(-90)" x="-0.18" y="3.72" font-size="10.4" fill="#fff" stroke-width="0.42">PR8819</text>
<text transform="translate(635.25,650.75) rotate(-90)" x="-0.17" y="3.73" font-size="10.41" fill="#fff" stroke-width="0.42">PC8802</text>
<text transform="translate(810.75,630.62)" x="-0.21" y="3.8" font-size="10.6" fill="#fff" stroke-width="0.42">PR8813</text>
<text transform="translate(869.38,652.62)" x="-0.19" y="3.8" font-size="10.62" fill="#fff" stroke-width="0.42">PR8809</text>
<text transform="translate(869.38,684)" x="-0.21" y="3.8" font-size="10.6" fill="#fff" stroke-width="0.42">PR8808</text>
<text transform="translate(620,704.25)" x="-0.25" y="5.67" font-size="15.82" fill="#fff">PR8817</text>
<text transform="translate(620,746.38)" x="-0.35" y="5.65" font-size="15.77" fill="#fff">PR8810</text>
<text transform="translate(559.88,743.88) rotate(-90)" x="-0.2" y="3.72" font-size="10.39" fill="#fff" stroke-width="0.42">PC8813</text>
<text transform="translate(497.5,734)" x="-0.19" y="3.8" font-size="10.62" fill="#fff" stroke-width="0.42">PC8809</text>
<text transform="translate(497.5,766.88)" x="-0.28" y="3.78" font-size="10.56" fill="#fff" stroke-width="0.42">PC8814</text>
<text transform="translate(838.88,755.25) rotate(-90)" x="0.47" y="3.94" font-size="11.02" fill="#fff" stroke-width="0.42">PC8811</text>
<text transform="translate(904.88,724.75)" x="-0.23" y="3.79" font-size="10.59" fill="#fff" stroke-width="0.42">PC8810</text>
<text transform="translate(904.88,764.12)" x="-0.21" y="3.8" font-size="10.6" fill="#fff" stroke-width="0.42">PC8808</text>
<text transform="translate(553.25,819.25) rotate(-90)" x="-0.31" y="5.62" font-size="15.69" fill="#fff">PC8803</text>
<text transform="translate(619.25,823.75) rotate(-90)" x="0.81" y="6.86" font-size="19.17" fill="#fff">PD8801</text>
<text transform="translate(849.88,811.5)" x="-0.42" y="5.63" font-size="15.73" fill="#fff">PC8804</text>
<text transform="translate(750.38,852.88)" x="-0.35" y="5.65" font-size="15.77" fill="#fff">PC8820</text>
<text transform="translate(758.38,966)" x="-0.21" y="3.8" font-size="10.6" fill="#fff" stroke-width="0.42">PR8843</text>
<text transform="translate(1021.88,447.75) rotate(-90)" x="-0.17" y="3.73" font-size="10.41" fill="#fff" stroke-width="0.42">PR6002</text>
<text transform="translate(1109.88,445.25) rotate(-90)" x="0.46" y="3.86" font-size="10.77" fill="#fff" stroke-width="0.42">PR6001</text>
<text transform="translate(1162.62,447.75) rotate(-90)" x="-0.23" y="3.71" font-size="10.37" fill="#fff" stroke-width="0.42">PR6000</text>
<text transform="translate(1107.25,534.62)" x="1" y="8.4" font-size="23.48" fill="#fff">PD6001</text>
<text transform="translate(1308.12,510.5) rotate(-90)" x="-0.5" y="9.42" font-size="26.32" fill="#fff">PJP8803</text>
<text transform="translate(1065.88,755) rotate(-90)" x="2.62" y="22.1" font-size="61.74" fill="#fff">PL8801</text>
<text transform="translate(1245.5,683.5)" x="-0.33" y="7.4" font-size="20.68" fill="#fff">PR8807</text>
<text transform="translate(1259,657.25)" x="-0.09" y="2.14" font-size="5.98" fill="#fff" stroke-width="0.42">PJ8802</text>
<text transform="translate(1229.75,693.12)" x="0.27" y="2.22" font-size="6.21" fill="#fff" stroke-width="0.42">PJ8801</text>
<text transform="translate(1244.25,812.5)" x="-0.25" y="5.67" font-size="15.82" fill="#fff">PC8807</text>
<text transform="translate(1253.88,849.12)" x="0.47" y="3.94" font-size="11" fill="#fff" stroke-width="0.42">PC8821</text>
<text transform="translate(1226.62,887.88)" x="-0.22" y="3.79" font-size="10.6" fill="#fff" stroke-width="0.42">PC8815</text>
<text transform="translate(1135.88,945) rotate(-90)" x="0.47" y="3.94" font-size="11.02" fill="#fff" stroke-width="0.42">PR8811</text>
<text transform="translate(1215,1000.5)" x="-0.36" y="6.64" font-size="18.55" fill="#fff">PQ8803</text>
<text transform="translate(1092.38,1005.75) rotate(-90)" x="-0.25" y="5.63" font-size="15.72" fill="#fff">PC8822</text>
<text transform="translate(780.25,465.38) rotate(-90)" x="-0.21" y="3.72" font-size="10.38" fill="#fff" stroke-width="0.42">PR8845</text>
<text transform="translate(763.62,520.12)" x="-0.28" y="3.78" font-size="10.56" fill="#fff" stroke-width="0.42">PR8814</text>
<text transform="translate(763.62,552)" x="-0.22" y="3.79" font-size="10.6" fill="#fff" stroke-width="0.42">PR8815</text>
<text transform="translate(766.25,597.5)" x="-0.22" y="3.79" font-size="10.6" fill="#fff" stroke-width="0.42">PC8825</text>
<text transform="translate(498.25,641.75) rotate(-90) scale(0.95,1)" x="-0.26" y="5.8" font-size="16.2" fill="#fff">RN4502</text>
<text transform="translate(498.25,641.75) rotate(-90) scale(0.98,1)" x="-0.25" y="5.8" font-size="16.2" fill="#fff">EX4502</text>
<text transform="translate(744.5,723.5)" x="-0.38" y="8.53" font-size="23.84" fill="#fff">PU8802</text>
<text transform="translate(744.5,723.5)" x="0.69" y="4.2" font-size="11.73" fill="#fff" stroke-width="0.42">21</text>
<text transform="translate(771.75,749.75)" x="0" y="3.89" font-size="10.87" fill="#fff" stroke-width="0.42">22</text>
</g>
</g>
</svg>
</body></html>
